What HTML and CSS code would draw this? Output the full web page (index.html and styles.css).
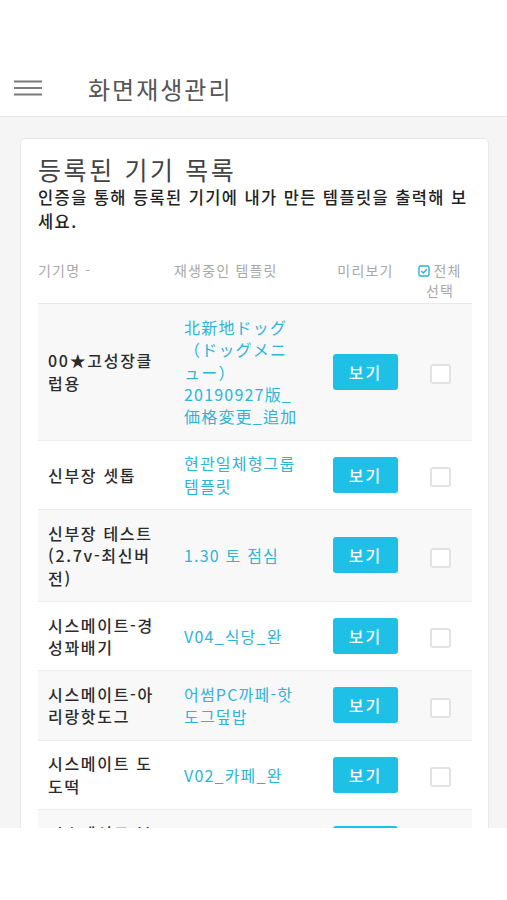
FILE: index.html
```html
<!DOCTYPE html>
<html lang="ko">
<head>
    <meta charset="UTF-8">
    <meta name="viewport" content="width=device-width, initial-scale=1.0">
    <title>화면재생관리</title>
    <link rel="stylesheet" href="styles.css">
</head>
<body>

<div class="status-space"></div>

<header class="topbar">
    <button class="menu-btn" aria-label="메뉴">
        <svg width="30" height="16" viewBox="0 0 30 16">
            <path d="M1 1.5H29M1 8H29M1 14.5H29" stroke="#7a7a7a" stroke-width="2.2" fill="none"/>
        </svg>
    </button>
    <h1>화면재생관리</h1>
</header>

<main class="content">
    <div class="card">
        <h2>등록된 기기 목록</h2>
        <p class="desc">인증을 통해 등록된 기기에 내가 만든 템플릿을 출력해 보세요.</p>

        <table class="device-table">
            <colgroup>
                <col class="c-name">
                <col class="c-tpl">
                <col class="c-view">
                <col class="c-check">
            </colgroup>
            <thead>
                <tr>
                    <th class="th-name">기기명 -</th>
                    <th class="th-tpl">재생중인 템플릿</th>
                    <th>미리보기</th>
                    <th class="th-all">
                        <svg class="all-icon" width="12" height="12" viewBox="0 0 12 12">
                            <rect x="1" y="1" width="10" height="10" rx="1.5" fill="none" stroke="#29b3d6" stroke-width="1.4"/>
                            <path d="M3.3 6.1L5.2 8L8.8 4.2" fill="none" stroke="#29b3d6" stroke-width="1.4"/>
                        </svg>전체<br>선택
                    </th>
                </tr>
            </thead>
            <tbody>
                <tr>
                    <td class="name">00★고성장클럽용</td>
                    <td class="tpl">北新地ドッグ<br>（ドッグメニ<br>ュー）<br>20190927版_<br>価格変更_追加</td>
                    <td class="view"><button class="view-btn">보기</button></td>
                    <td class="check"><span class="box"></span></td>
                </tr>
                <tr>
                    <td class="name">신부장 셋톱</td>
                    <td class="tpl">현관일체형그룹 템플릿</td>
                    <td class="view"><button class="view-btn">보기</button></td>
                    <td class="check"><span class="box"></span></td>
                </tr>
                <tr>
                    <td class="name">신부장 테스트 (2.7v-최신버전)</td>
                    <td class="tpl">1.30 토 점심</td>
                    <td class="view"><button class="view-btn">보기</button></td>
                    <td class="check"><span class="box"></span></td>
                </tr>
                <tr>
                    <td class="name">시스메이트-경성꽈배기</td>
                    <td class="tpl">V04_식당_완</td>
                    <td class="view"><button class="view-btn">보기</button></td>
                    <td class="check"><span class="box"></span></td>
                </tr>
                <tr>
                    <td class="name">시스메이트-아리랑핫도그</td>
                    <td class="tpl">어썸PC까페-핫도그덮밥</td>
                    <td class="view"><button class="view-btn">보기</button></td>
                    <td class="check"><span class="box"></span></td>
                </tr>
                <tr>
                    <td class="name">시스메이트 도도떡</td>
                    <td class="tpl">V02_카페_완</td>
                    <td class="view"><button class="view-btn">보기</button></td>
                    <td class="check"><span class="box"></span></td>
                </tr>
                <tr>
                    <td class="name">시스메이트 본점</td>
                    <td class="tpl">V01_식당_완</td>
                    <td class="view"><button class="view-btn">보기</button></td>
                    <td class="check"><span class="box"></span></td>
                </tr>
            </tbody>
        </table>
    </div>
</main>

</body>
</html>
```

FILE: styles.css
```css
body {
    margin: 0;
    padding: 0;
    background-color: #fff;
    color: #333;
    font-family: "Noto Sans CJK KR", "Noto Sans", sans-serif;
}
.status-space {
    height: 60px;
}
.topbar {
    display: flex;
    align-items: center;
    height: 56px;
    border-bottom: 1px solid #e6e6e6;
}
.menu-btn {
    display: flex;
    border: none;
    background: none;
    padding: 0;
    margin-left: 13px;
    cursor: pointer;
}
.topbar h1 {
    margin: 0 0 0 45px;
    font-size: 24px;
    font-weight: 400;
    color: #555;
    letter-spacing: 2px;
}
.content {
    height: 690px;
    overflow: hidden;
    background-color: #f5f5f5;
    padding: 21px 18px 0 20px;
}
.card {
    background-color: #fff;
    border: 1px solid #e8e8e8;
    border-radius: 5px;
    padding: 14px 16px 0 17px;
    min-height: 900px;
}
.card h2 {
    margin: 0;
    font-size: 25px;
    line-height: 32px;
    font-weight: 400;
    color: #444;
    letter-spacing: 2.6px;
}
.desc {
    margin: 0;
    font-size: 16.5px;
    line-height: 24px;
    font-weight: 500;
    color: #222;
    letter-spacing: 1.4px;
}
.device-table {
    width: 434px;
    margin-top: 22px;
    border-collapse: collapse;
    table-layout: fixed;
}
.c-name { width: 136px; }
.c-tpl { width: 149px; }
.c-view { width: 85px; }
.c-check { width: 64px; }
.device-table th {
    font-size: 14px;
    line-height: 20px;
    font-weight: 400;
    color: #a8a8a8;
    vertical-align: baseline;
    padding: 5px 0 3px;
    border-bottom: 1px solid #e8e8e8;
    letter-spacing: 1.2px;
}
.th-name, .th-tpl {
    text-align: left;
}
.th-all {
    text-align: center;
}
.all-icon {
    vertical-align: -1px;
    margin-right: 3px;
}
.device-table td {
    padding: 11.8px 0;
    vertical-align: middle;
    border-bottom: 1px solid #ececec;
}
.device-table tbody tr:nth-child(odd) {
    background-color: #f8f8f8;
}
.name {
    padding-left: 10px !important;
    padding-right: 16px !important;
    font-size: 16px;
    line-height: 22.4px;
    font-weight: 500;
    color: #2b2b2b;
    letter-spacing: 1.7px;
}
.tpl {
    padding-left: 10px !important;
    padding-right: 22px !important;
    font-size: 16px;
    line-height: 22.4px;
    color: #2fb4d8;
    letter-spacing: 1.2px;
}
.view {
    text-align: center;
}
.view-btn {
    width: 65px;
    height: 36px;
    border: none;
    border-radius: 3px;
    background-color: #1ec0e5;
    color: #fff;
    font-family: "Noto Sans CJK KR", sans-serif;
    font-size: 16px;
    font-weight: 500;
    letter-spacing: 2px;
    cursor: pointer;
}
.check {
    text-align: center;
}
.box {
    display: inline-block;
    width: 17px;
    height: 16px;
    border: 2px solid #e2e2e2;
    border-radius: 3px;
    background-color: #fff;
    vertical-align: middle;
}
```
